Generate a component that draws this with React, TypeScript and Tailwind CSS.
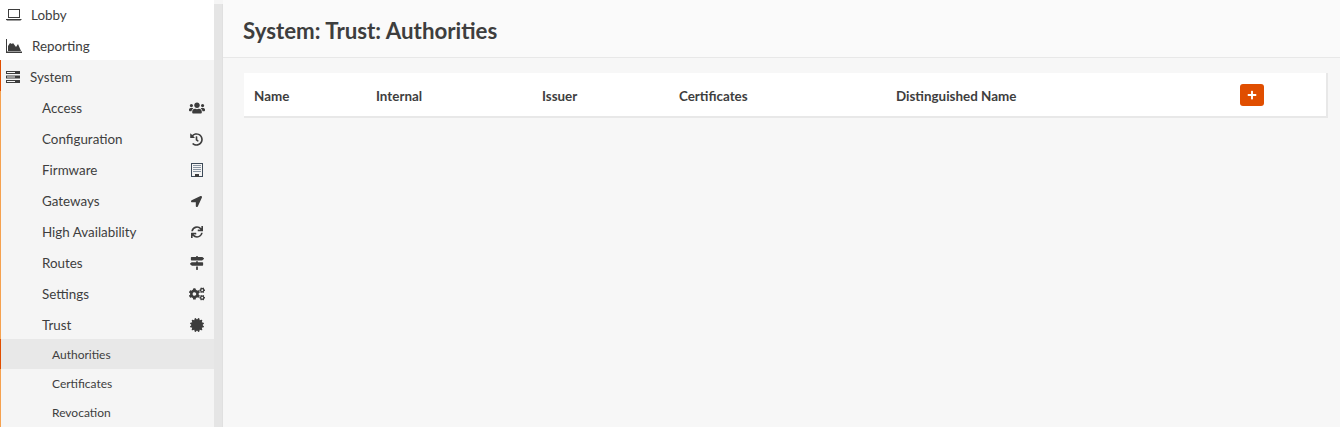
import React from "react";
import { FaUsers, FaHistory, FaLocationArrow, FaSync, FaMapSigns, FaCogs, FaCertificate, FaPlus } from "react-icons/fa";

const font = "font-['Lato','Noto_Sans',sans-serif]";

function Laptop() {
  return (
    <svg width="16" height="12" viewBox="0 0 16 12" fill="none" className="text-[#3d3d3d]">
      <rect x="2.5" y="0.5" width="11" height="8" stroke="currentColor" />
      <path d="M0 10h15.5v0.5l-1 1H1l-1-1z" fill="currentColor" />
    </svg>
  );
}
function Chart() {
  return (
    <svg width="16" height="14" viewBox="0 0 16 14" className="text-[#3d3d3d]">
      <path d="M0 0h1v12.5h15V14H0z" fill="currentColor" />
      <path d="M2 12V7l2-3 2 1 1-1 3 4 2-3 3 7z" fill="currentColor" />
    </svg>
  );
}
function Server() {
  return (
    <svg width="14" height="12" viewBox="0 0 14 12" className="text-[#3d3d3d]">
      <path d="M0 0h14v3H0zM0 4.5h14v3H0zM0 9h14v3H0z" fill="currentColor" />
      <path d="M1 1h8v1H1zM1 5.5h8v1H1zM1 10h8v1H1z" fill="#f5f5f5" />
    </svg>
  );
}
function Building() {
  return (
    <svg width="12" height="14" viewBox="0 0 12 14">
      <rect x="0.5" y="0.5" width="11" height="13" fill="none" stroke="#3d4a58" />
      <path d="M2 2.5h8M2 4.5h8M2 6.5h8M2 8.5h8" stroke="#8a96a3" strokeWidth="1" />
      <path d="M4 11h4v3H4z" fill="#3d3d3d" />
    </svg>
  );
}

const items = [
  { label: "Access", icon: <FaUsers size={16} /> },
  { label: "Configuration", icon: <FaHistory size={13} /> },
  { label: "Firmware", icon: <Building /> },
  { label: "Gateways", icon: <FaLocationArrow size={11} /> },
  { label: "High Availability", icon: <FaSync size={12} /> },
  { label: "Routes", icon: <FaMapSigns size={14} /> },
  { label: "Settings", icon: <FaCogs size={16} /> },
  { label: "Trust", icon: <FaCertificate size={14} /> },
];

export default function App() {
  return (
    <div className={`${font} flex h-[427px] w-[1340px] overflow-hidden bg-[#f7f7f7] text-[#3e3e3e]`}>
      <aside className="flex w-[214px] shrink-0 flex-col bg-white text-[13.4px]">
        <div className="flex h-[31px] items-center pl-[6px]">
          <Laptop />
          <span className="ml-[9px]">Lobby</span>
        </div>
        <div className="flex h-[30px] items-center pl-[6px] pt-[2px]">
          <Chart />
          <span className="ml-[10px]">Reporting</span>
        </div>
        <div className="flex flex-1 flex-col bg-[#f5f5f5]">
          <div className="flex h-[31px] items-center border-l border-[#e04e00] pl-[5px] pt-[3px]">
            <Server />
            <span className="ml-[10px]">System</span>
          </div>
          {items.map(({ label, icon }) => (
            <div key={label} className="flex h-[31px] shrink-0 items-center justify-between border-l border-[#f5a14f] pl-[41px] pt-[3px]">
              <span>{label}</span>
              <span className="flex w-[34px] items-center justify-center pr-[1px] text-[#3d3d3d]">{icon}</span>
            </div>
          ))}
          <div className="flex h-[30px] shrink-0 items-center border-l border-[#e04e00] bg-[#e8e8e8] pl-[51px] pt-[1px] text-[12px]">Authorities</div>
          <div className="flex h-[29px] shrink-0 items-center border-l border-[#f5a14f] pl-[51px] text-[12px]">Certificates</div>
          <div className="flex h-[29px] shrink-0 items-center border-l border-[#f5a14f] pl-[51px] text-[12px]">Revocation</div>
        </div>
      </aside>
      <div className="flex w-[9px] shrink-0 flex-col">
        <div className="h-[4px] bg-[#f5f5f5]" />
        <div className="flex-1 border-r border-[#e0e0e0] bg-[#e5e5e5]" />
      </div>
      <main className="flex min-w-0 flex-1 flex-col">
        <header className="flex h-[58px] items-center border-b border-[#e8e8e8] bg-[#fafafa] pl-[20px] pt-[4px]">
          <h1 className="text-[22.3px] font-bold text-[#3e3e3e]">System: Trust: Authorities</h1>
        </header>
        <div className="pl-[21px] pr-[12px] pt-[15px]">
          <div className="flex h-[45px] items-center border-b-2 border-r-2 border-[#e8e8e8] bg-white pt-[4px] text-[13.4px] font-bold">
            <span className="box-border w-[121px] pl-[10px]">Name</span>
            <span className="box-border w-[166px] pl-[11px]">Internal</span>
            <span className="box-border w-[137px] pl-[11px]">Issuer</span>
            <span className="box-border w-[217px] pl-[11px]">Certificates</span>
            <span className="box-border w-[355px] pl-[11px]">Distinguished Name</span>
            <button className="-mt-[3px] flex h-[22px] w-[24px] items-center justify-center rounded-[3px] bg-[#e04e00] text-white">
              <FaPlus size={10} />
            </button>
          </div>
        </div>
      </main>
    </div>
  );
}
